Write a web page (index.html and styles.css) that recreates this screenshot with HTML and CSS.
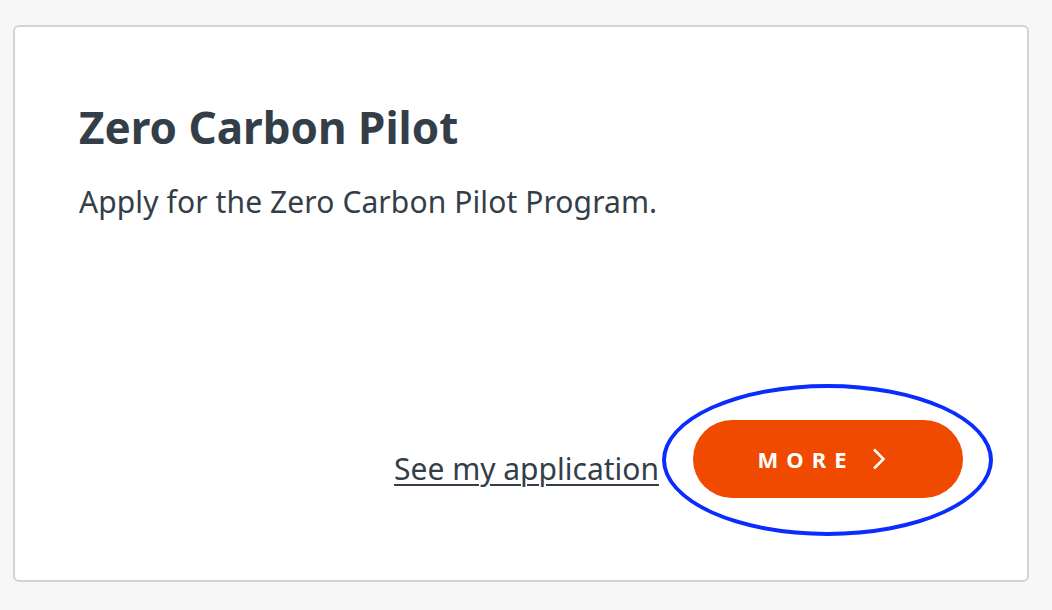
FILE: index.html
```html
<!DOCTYPE html>
<html lang="en">
<head>
<meta charset="utf-8">
<title>Zero Carbon Pilot</title>
<link rel="stylesheet" href="styles.css">
</head>
<body>
<div class="card">
  <h2 class="title">Zero Carbon Pilot</h2>
  <p class="desc">Apply for the Zero Carbon Pilot Program.</p>
  <div class="actions">
    <a class="link" href="#">See my application</a>
    <button class="more" type="button">
      <span class="more-label">MORE</span>
      <svg class="chev" width="14" height="22" viewBox="0 0 14 22" aria-hidden="true"><path d="M2 1.5 L11.5 11 L2 20.5" fill="none" stroke="#ffffff" stroke-width="2.6"/></svg>
      <span class="ring"></span>
    </button>
  </div>
</div>
</body>
</html>
```
FILE: styles.css
```css
html, body {
  margin: 0;
  padding: 0;
  background: #f6f7f6;
}
body {
  padding: 25px 23px 28px 13px;
  font-family: "Noto Sans", "Liberation Sans", sans-serif;
  color: #343e48;
}
.card {
  box-sizing: border-box;
  height: 557px;
  background: #ffffff;
  border: 2px solid #d2d4d3;
  border-radius: 6px;
  padding: 72px 64px 82px 64px;
  display: flex;
  flex-direction: column;
}
.title {
  margin: 0;
  font-size: 44px;
  font-weight: 700;
  line-height: 56px;
}
.desc {
  margin: 27px 0 0 0;
  font-size: 30px;
  letter-spacing: 0.1px;
  line-height: 40px;
}
.actions {
  margin-top: auto;
  display: flex;
  justify-content: flex-end;
  align-items: center;
  gap: 34px;
}
.link {
  color: #343e48;
  font-size: 30px;
  text-decoration: underline;
  text-decoration-thickness: 2px;
  text-underline-offset: 4px;
  padding-top: 18px;
}
.more {
  position: relative;
  width: 270px;
  height: 78px;
  border: none;
  border-radius: 39px;
  background: #f04a00;
  color: #ffffff;
  font-family: inherit;
  font-size: 22px;
  font-weight: 700;
  letter-spacing: 8px;
  display: flex;
  align-items: center;
  justify-content: center;
  gap: 18px;
  padding: 0 12px 0 0;
}
.chev {
  display: block;
}
.ring {
  position: absolute;
  left: -31px;
  right: -30px;
  top: -36px;
  bottom: -38px;
  border: 4px solid #0a2cff;
  border-radius: 50%;
  pointer-events: none;
}
```
